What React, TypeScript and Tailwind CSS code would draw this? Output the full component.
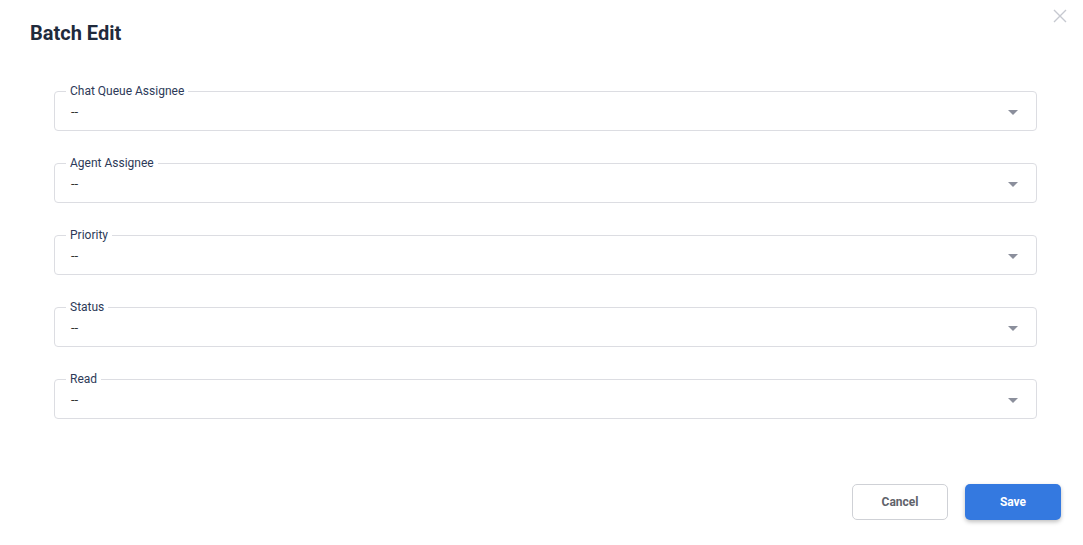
const fields = ["Chat Queue Assignee", "Agent Assignee", "Priority", "Status", "Read"];

function SelectField({ label }: { label: string }) {
  return (
    <fieldset className="border border-[#dcdde2] rounded-[4px] pl-[11px] pr-[19px]">
      <legend className="px-[4px] text-[12px] leading-[14px] text-[#2d3a58]">{label}</legend>
      <div className="flex items-center justify-between h-[28px] mb-[4px] pl-[5px]">
        <span className="text-[13px] text-[#333]">--</span>
        <svg width="10" height="5" viewBox="0 0 10 5" className="-mr-[1px]">
          <path d="M0 0 L10 0 L5 5 Z" fill="#8b8f9c" />
        </svg>
      </div>
    </fieldset>
  );
}

export default function App() {
  return (
    <div className="w-[1083px] h-[545px] bg-white relative font-['Roboto',sans-serif]">
      {/* close */}
      <button className="absolute top-[9px] left-[1053px]">
        <svg width="14" height="14" viewBox="0 0 14 14">
          <path d="M1 1 L13 13 M13 1 L1 13" stroke="#c6c9d0" strokeWidth="1.4" />
        </svg>
      </button>
      <h1 className="pl-[30px] pt-[21px] text-[20px] leading-[24px] font-bold text-[#1f2a3c]">Batch Edit</h1>
      <div className="flex flex-col gap-[25px] mt-[39px] ml-[54px] mr-[46px]">
        {fields.map((f) => (
          <SelectField key={f} label={f} />
        ))}
      </div>
      <div className="flex justify-end gap-[17px] mt-[65px] pr-[22px]">
        <button className="w-[96px] h-[36px] border border-[#cfd1d6] rounded-[5px] text-[12px] font-bold text-[#5f636b]">
          Cancel
        </button>
        <button className="w-[96px] h-[36px] rounded-[5px] bg-[#3479e0] text-[12px] font-bold text-white shadow-[0_2px_4px_rgba(0,0,0,0.25)]">
          Save
        </button>
      </div>
    </div>
  );
}
